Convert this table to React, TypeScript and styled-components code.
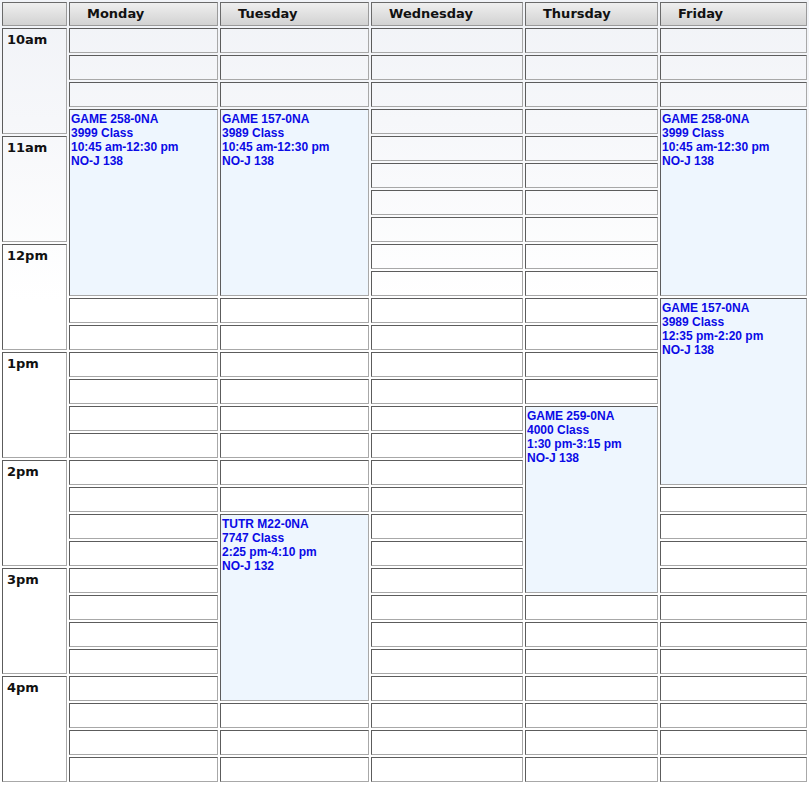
import styled, { createGlobalStyle } from 'styled-components';

const DAYS = [
  { name: 'Monday', width: 149 },
  { name: 'Tuesday', width: 149 },
  { name: 'Wednesday', width: 152 },
  { name: 'Thursday', width: 133 },
  { name: 'Friday', width: 147 },
];

const HOURS = ['10am', '11am', '12pm', '1pm', '2pm', '3pm', '4pm'];
const SLOT_COUNT = HOURS.length * 4;

type ClassEvent = { day: number; start: number; span: number; lines: string[] };

const EVENTS: ClassEvent[] = [
  { day: 0, start: 3, span: 7, lines: ['GAME 258-0NA', '3999 Class', '10:45 am-12:30 pm', 'NO-J 138'] },
  { day: 1, start: 3, span: 7, lines: ['GAME 157-0NA', '3989 Class', '10:45 am-12:30 pm', 'NO-J 138'] },
  { day: 1, start: 18, span: 7, lines: ['TUTR M22-0NA', '7747 Class', '2:25 pm-4:10 pm', 'NO-J 132'] },
  { day: 3, start: 14, span: 7, lines: ['GAME 259-0NA', '4000 Class', '1:30 pm-3:15 pm', 'NO-J 138'] },
  { day: 4, start: 3, span: 7, lines: ['GAME 258-0NA', '3999 Class', '10:45 am-12:30 pm', 'NO-J 138'] },
  { day: 4, start: 10, span: 7, lines: ['GAME 157-0NA', '3989 Class', '12:35 pm-2:20 pm', 'NO-J 138'] },
];

const renderDayCell = (row: number, day: number) => {
  const event = EVENTS.find((e) => e.day === day && e.start === row);
  if (event) {
    return (
      <EventCell key={day} rowSpan={event.span}>
        {event.lines.map((line) => (
          <EventLine key={line}>{line}</EventLine>
        ))}
      </EventCell>
    );
  }
  const covered = EVENTS.some((e) => e.day === day && row > e.start && row < e.start + e.span);
  if (covered) return null;
  return <SlotCell key={day} />;
};

export default function App() {
  const rows = Array.from({ length: SLOT_COUNT }, (_, i) => i);

  return (
    <>
      <GlobalStyle />
      <ScheduleTable>
        <thead>
          <tr>
            <HeadCell $width={65} />
            {DAYS.map((d) => (
              <HeadCell key={d.name} $width={d.width}>
                {d.name}
              </HeadCell>
            ))}
          </tr>
        </thead>
        <tbody>
          {rows.map((row) => (
            <tr key={row}>
              {row % 4 === 0 && <TimeCell rowSpan={4}>{HOURS[row / 4]}</TimeCell>}
              {DAYS.map((_, day) => renderDayCell(row, day))}
            </tr>
          ))}
        </tbody>
      </ScheduleTable>
    </>
  );
}

const GlobalStyle = createGlobalStyle`
  html, body {
    margin: 0;
    padding: 0;
    background: #ffffff;
  }
`;

const ScheduleTable = styled.table`
  width: 809px;
  table-layout: fixed;
  border-collapse: separate;
  border-spacing: 2px;
  background: linear-gradient(to bottom, #f1f3f7 0px, #f6f7fa 120px, #ffffff 300px);
  font-family: 'DejaVu Sans', Verdana, sans-serif;
`;

const cellBorder = `
  box-sizing: border-box;
  border: 1px solid;
  border-color: #5c5c5c #a8a8a8 #a8a8a8 #5c5c5c;
`;

const HeadCell = styled.th<{ $width: number }>`
  ${cellBorder}
  width: ${({ $width }) => $width}px;
  height: 24px;
  padding: 0 0 2px 17px;
  background: linear-gradient(to bottom, #efefef, #d2d2d2);
  border-color: #6a6a6a #9a9a9a #9a9a9a #6a6a6a;
  font-size: 13px;
  font-weight: bold;
  color: #111111;
  text-align: left;
  vertical-align: middle;
`;

const TimeCell = styled.td`
  ${cellBorder}
  padding: 3px 0 0 4px;
  vertical-align: top;
  font-size: 13px;
  font-weight: bold;
  line-height: 16px;
  color: #111111;
`;

const SlotCell = styled.td`
  ${cellBorder}
  height: 25px;
  padding: 0;
`;

const EventCell = styled.td`
  ${cellBorder}
  padding: 2px 1px;
  vertical-align: top;
  background: #eef6fe;
  font-family: 'Liberation Sans', Arial, sans-serif;
  font-size: 12px;
  font-weight: bold;
  line-height: 14px;
  color: #0a0ae6;
`;

const EventLine = styled.div`
  white-space: nowrap;
`;
